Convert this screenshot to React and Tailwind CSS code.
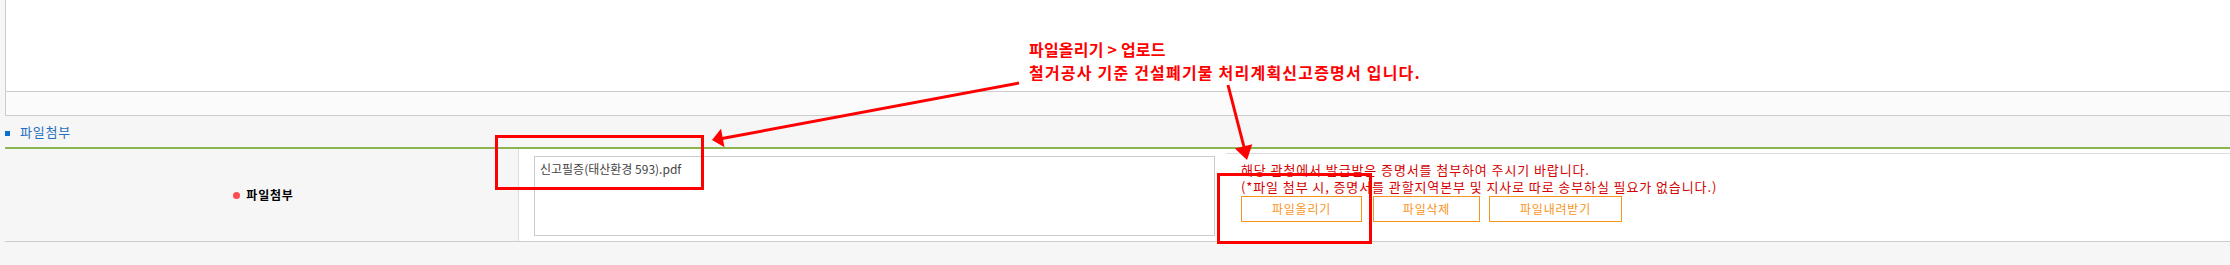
const BUTTONS = [
  { label: '파일올리기', w: 'w-[121px]', ml: '' },
  { label: '파일삭제', w: 'w-[107px]', ml: 'ml-[11px]' },
  { label: '파일내려받기', w: 'w-[133px]', ml: 'ml-[9px]' },
];

function Annotations() {
  return (
    <>
      {/* callout text */}
      <div className="absolute left-[1029px] top-[38px] text-[16px] leading-[23px] font-bold text-[#ff0000] whitespace-nowrap">
        <p className="tracking-[0.2px]">파일올리기 &gt; 업로드</p>
        <p className="tracking-[1.2px]">철거공사 기준 건설폐기물 처리계획신고증명서 입니다.</p>
      </div>

      {/* arrows + boxes */}
      <svg
        className="absolute inset-0 pointer-events-none"
        width="2230"
        height="265"
        viewBox="0 0 2230 265"
      >
        <g stroke="#ff0000" strokeWidth="3" fill="none">
          <rect x="496.5" y="136.5" width="206" height="52" />
          <rect x="1218.5" y="174.5" width="152" height="68" />
          <line x1="1019" y1="83" x2="722" y2="138.5" />
          <line x1="1228" y1="85" x2="1244" y2="147" />
        </g>
        <g fill="#ff0000">
          <polygon points="712,140 721,128.7 724.5,147.3" />
          <polygon points="1247,160 1252.3,144.2 1234.9,148.6" />
        </g>
      </svg>
    </>
  );
}

export default function App() {
  return (
    <div className="relative w-[2230px] h-[265px] overflow-hidden bg-[#f6f6f6] font-['Noto_Sans_CJK_KR',sans-serif]">
      {/* previous section box */}
      <div className="ml-[5px] border-l border-[#cccccc]">
        <div className="h-[92px] bg-white border-b border-[#cccccc]" />
        <div className="h-[24px] bg-[#fbfbfb] border-b border-[#cccccc]" />
      </div>

      {/* section title */}
      <div className="ml-[5px] h-[31px] flex items-center">
        <span className="w-[5px] h-[5px] bg-[#0a6fcf] mt-[3px]" />
        <span className="ml-[10px] text-[13px] tracking-[0.8px] text-[#1f6fbf]">파일첨부</span>
      </div>
      <div className="ml-[5px] h-[2px] bg-[#8cb552]" />

      {/* file row */}
      <div className="ml-[5px] h-[93px] flex border-b border-[#cccccc]">
        <div className="w-[514px] border-r border-[#dddddd] bg-[#f6f6f6] flex items-center justify-center gap-[6px] pl-[4px]">
          <span className="w-[7px] h-[7px] rounded-full bg-[#ff4d4d]" />
          <span className="text-[12px] font-bold tracking-[0.8px] text-black">파일첨부</span>
        </div>

        <div className="flex-1 bg-white flex pl-[15px] pt-[4px]">
          <div className="w-[681px] h-[80px] mt-[3px] border border-[#cccccc] bg-white px-[5px] pt-[3px] text-[12px] leading-[18px] text-[#444444]">
            신고필증(태산환경 593).pdf
          </div>

          <div className="flex-1 ml-[11px] border-t border-[#dddddd] pl-[15px] pt-[7px]">
            <p className="text-[13px] leading-[17px] tracking-[0.9px] text-[#d40000] whitespace-nowrap">
              해당 관청에서 발급받은 증명서를 첨부하여 주시기 바랍니다.
            </p>
            <p className="text-[13px] leading-[17px] tracking-[0.9px] text-[#d40000] whitespace-nowrap">
              (*파일 첨부 시, 증명서를 관할지역본부 및 지사로 따로 송부하실 필요가 없습니다.)
            </p>
            <div className="flex mt-[1px]">
              {BUTTONS.map(b => (
                <button
                  key={b.label}
                  className={`${b.w} ${b.ml} h-[26px] border border-[#f7941d] bg-white text-[12px] tracking-[0.8px] text-[#f7941d] flex items-center justify-center`}
                >
                  {b.label}
                </button>
              ))}
            </div>
          </div>
        </div>
      </div>

      <Annotations />
    </div>
  );
}
